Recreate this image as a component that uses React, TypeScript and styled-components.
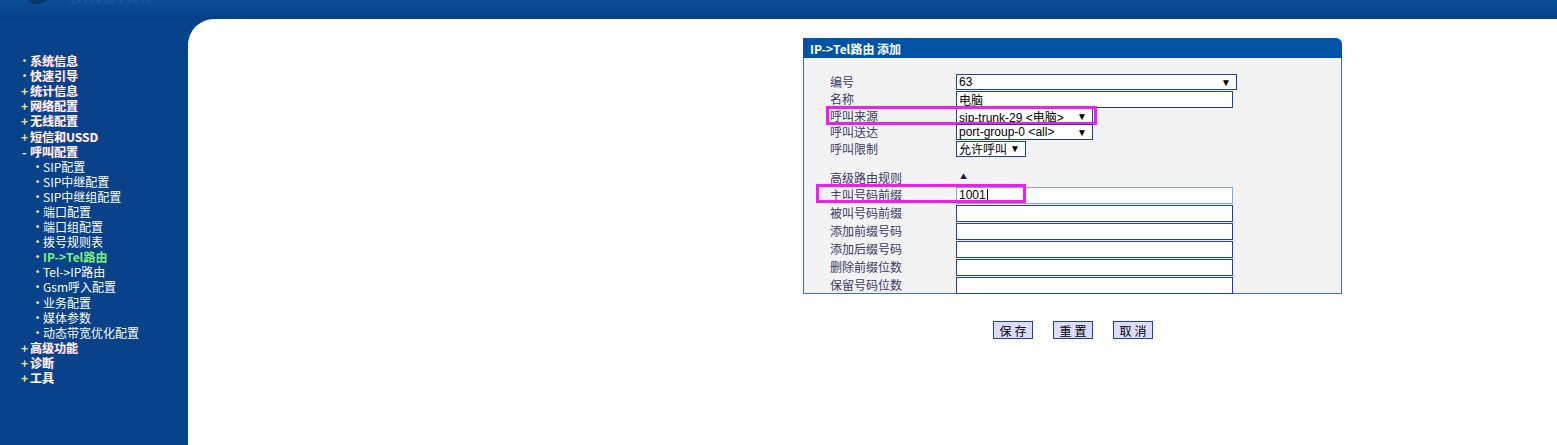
import * as React from 'react';
import styled, { createGlobalStyle } from 'styled-components';

const GlobalStyle = createGlobalStyle`
  html, body { margin: 0; padding: 0; }
  body {
    background: #07428a;
    font-family: "Noto Sans CJK SC", "Liberation Sans", Arial, sans-serif;
    font-size: 12px;
  }
`;

const Page = styled.div`
  width: 1557px;
  height: 445px;
  display: flex;
  flex-direction: column;
  overflow: hidden;
  background: #07428a;
`;

const Header = styled.div`
  height: 19px;
  flex-shrink: 0;
  position: relative;
  overflow: hidden;
  background: linear-gradient(#0b4f96, #053f86);
`;

const LogoBall = styled.div`
  position: absolute;
  left: 22px;
  top: -26px;
  width: 30px;
  height: 30px;
  border-radius: 50%;
  background: radial-gradient(circle at 50% 40%, #0d4a8f, #062c5e);
`;

const LogoText = styled.div`
  position: absolute;
  left: 70px;
  top: -10px;
  font-family: "Liberation Sans", Arial, sans-serif;
  font-size: 16px;
  font-weight: bold;
  color: rgba(120, 160, 210, 0.12);
  letter-spacing: 2px;
`;

const Body = styled.div`
  flex: 1;
  display: flex;
`;

const Sidebar = styled.div`
  width: 188px;
  flex-shrink: 0;
  padding-top: 34px;
  display: flex;
  flex-direction: column;
`;

const MenuItem = styled.div<{ $sub?: boolean; $active?: boolean }>`
  height: 15.1px;
  line-height: 15px;
  display: flex;
  align-items: center;
  padding-left: ${p => (p.$sub ? '33px' : '20px')};
  font-size: 12px;
  font-weight: ${p => (p.$sub && !p.$active ? 'normal' : 'bold')};
  color: ${p => (p.$active ? '#7cf07c' : '#ffffff')};
  text-shadow: ${p => (p.$sub ? 'none' : '1px 0 0 rgba(220, 60, 200, 0.55)')};
  white-space: nowrap;
`;

const Bullet = styled.span<{ $kind: 'dot' | 'plus' | 'minus' }>`
  width: 9px;
  display: inline-flex;
  justify-content: center;
  margin-right: 1px;
  color: ${p => (p.$kind === 'minus' ? '#ffffff' : '#f2e87a')};
  font-size: ${p => (p.$kind === 'dot' ? '11px' : '12px')};
  font-weight: bold;
  text-shadow: none;
`;

const Content = styled.div`
  flex: 1;
  background: #ffffff;
  border-top-left-radius: 26px;
  padding: 19px 0 0 615px;
`;

const Panel = styled.div`
  width: 539px;
`;

const PanelHead = styled.div`
  height: 20px;
  background: #0054a6;
  border-top-right-radius: 6px;
  color: #ffffff;
  font-weight: bold;
  font-size: 12px;
  line-height: 21px;
  padding-left: 7px;
`;

const PanelBody = styled.div`
  background: #f3f3f3;
  border: 1px solid #3d6fd2;
  border-top: none;
  padding: 16px 0 0 26px;
  height: 219px;
`;

const Row = styled.div<{ $h: number }>`
  position: relative;
  height: ${p => p.$h}px;
  display: flex;
  align-items: center;
`;

const Label = styled.div`
  width: 126px;
  flex-shrink: 0;
  color: #3a3a6a;
  font-size: 12px;
  line-height: 14px;
`;

const SelectBox = styled.div<{ $w: number }>`
  width: ${p => p.$w}px;
  height: 16px;
  box-sizing: border-box;
  border: 1px solid #1c3fb4;
  background: #ffffff;
  display: flex;
  align-items: center;
  justify-content: space-between;
  padding: 0 5px 0 2px;
  font-family: "Liberation Sans", "Noto Sans CJK SC", Arial, sans-serif;
  font-size: 12px;
  color: #000000;
  white-space: nowrap;
`;

const Arrow = styled.span`
  font-size: 10px;
  color: #000;
`;

const TextBox = styled.div<{ $focus?: boolean }>`
  width: 277px;
  height: 17px;
  box-sizing: border-box;
  border: 1px solid ${p => (p.$focus ? '#7ea6e6' : '#1c3fb4')};
  background: #ffffff;
  display: flex;
  align-items: center;
  padding-left: 2px;
  font-family: "Liberation Sans", "Noto Sans CJK SC", Arial, sans-serif;
  font-size: 12px;
  color: #000;
`;

const Caret = styled.span`
  width: 1px;
  height: 13px;
  background: #000;
  margin-left: 1px;
`;

const UpArrow = styled.span`
  margin-left: 4px;
  font-size: 7px;
  color: #1a1a5a;
  margin-top: -4px;
`;

const Marker = styled.div<{ $l: number; $w: number }>`
  position: absolute;
  left: ${p => p.$l}px;
  top: -2px;
  width: ${p => p.$w}px;
  height: 19px;
  box-sizing: border-box;
  border: 3px solid #f01ef0;
  pointer-events: none;
`;

const Buttons = styled.div`
  display: flex;
  gap: 20px;
  padding: 27px 0 0 190px;
`;

const Button = styled.button`
  width: 40px;
  height: 18px;
  padding: 0;
  background: #dadcfa;
  border: 1px solid #1c3fb4;
  font-family: "Noto Sans CJK SC", sans-serif;
  font-size: 12px;
  letter-spacing: 3px;
  text-indent: 3px;
  color: #000;
  line-height: 15px;
`;

const menu: { text: string; kind: 'dot' | 'plus' | 'minus'; sub?: boolean; active?: boolean }[] = [
  { text: '系统信息', kind: 'dot' },
  { text: '快速引导', kind: 'dot' },
  { text: '统计信息', kind: 'plus' },
  { text: '网络配置', kind: 'plus' },
  { text: '无线配置', kind: 'plus' },
  { text: '短信和USSD', kind: 'plus' },
  { text: '呼叫配置', kind: 'minus' },
  { text: 'SIP配置', kind: 'dot', sub: true },
  { text: 'SIP中继配置', kind: 'dot', sub: true },
  { text: 'SIP中继组配置', kind: 'dot', sub: true },
  { text: '端口配置', kind: 'dot', sub: true },
  { text: '端口组配置', kind: 'dot', sub: true },
  { text: '拨号规则表', kind: 'dot', sub: true },
  { text: 'IP->Tel路由', kind: 'dot', sub: true, active: true },
  { text: 'Tel->IP路由', kind: 'dot', sub: true },
  { text: 'Gsm呼入配置', kind: 'dot', sub: true },
  { text: '业务配置', kind: 'dot', sub: true },
  { text: '媒体参数', kind: 'dot', sub: true },
  { text: '动态带宽优化配置', kind: 'dot', sub: true },
  { text: '高级功能', kind: 'plus' },
  { text: '诊断', kind: 'plus' },
  { text: '工具', kind: 'plus' },
];

const glyph = { dot: '•', plus: '+', minus: '-' };

const emptyFields = ['被叫号码前缀', '添加前缀号码', '添加后缀号码', '删除前缀位数', '保留号码位数'];

export default function App() {
  return (
    <Page>
      <GlobalStyle />
      <Header>
        <LogoBall />
        <LogoText>DINSTAR</LogoText>
      </Header>
      <Body>
        <Sidebar>
          {menu.map((m, i) => (
            <MenuItem key={i} $sub={m.sub} $active={m.active}>
              <Bullet $kind={m.kind}>{glyph[m.kind]}</Bullet>
              {m.text}
            </MenuItem>
          ))}
        </Sidebar>
        <Content>
          <Panel>
            <PanelHead>IP-&gt;Tel路由 添加</PanelHead>
            <PanelBody>
              <Row $h={16}>
                <Label>编号</Label>
                <SelectBox $w={281}>63<Arrow>▼</Arrow></SelectBox>
              </Row>
              <Row $h={18}>
                <Label>名称</Label>
                <TextBox>电脑</TextBox>
              </Row>
              <Row $h={16}>
                <Label>呼叫来源</Label>
                <SelectBox $w={137}>sip-trunk-29 &lt;电脑&gt;<Arrow>▼</Arrow></SelectBox>
                <Marker $l={-4} $w={271} />
              </Row>
              <Row $h={16}>
                <Label>呼叫送达</Label>
                <SelectBox $w={137}>port-group-0 &lt;all&gt;<Arrow>▼</Arrow></SelectBox>
              </Row>
              <Row $h={17}>
                <Label>呼叫限制</Label>
                <SelectBox $w={70}>允许呼叫<Arrow>▼</Arrow></SelectBox>
              </Row>
              <Row $h={12} />
              <Row $h={17}>
                <Label>高级路由规则</Label>
                <UpArrow>▲</UpArrow>
              </Row>
              <Row $h={18}>
                <Label>主叫号码前缀</Label>
                <TextBox $focus>1001<Caret /></TextBox>
                <Marker $l={-14} $w={210} />
              </Row>
              {emptyFields.map(f => (
                <Row key={f} $h={18}>
                  <Label>{f}</Label>
                  <TextBox />
                </Row>
              ))}
            </PanelBody>
          </Panel>
          <Buttons>
            <Button>保存</Button>
            <Button>重置</Button>
            <Button>取消</Button>
          </Buttons>
        </Content>
      </Body>
    </Page>
  );
}
